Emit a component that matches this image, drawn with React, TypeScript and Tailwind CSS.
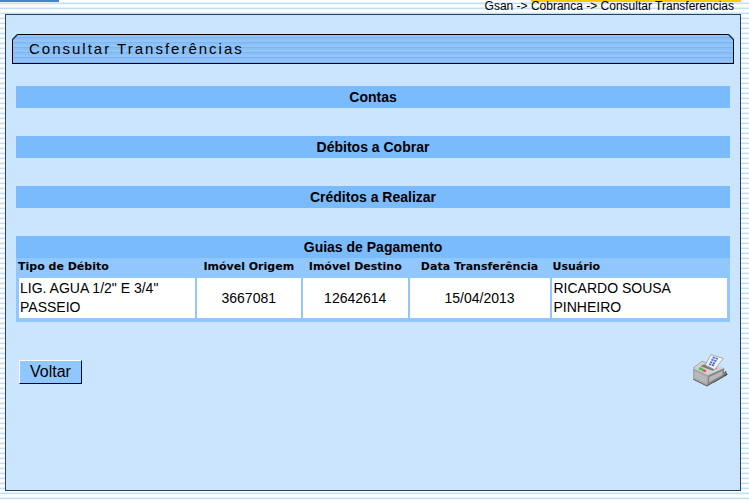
const emptySections = ["Contas", "Débitos a Cobrar", "Créditos a Realizar"];

interface Guia {
  tipoDebito: string;
  imovelOrigem: string;
  imovelDestino: string;
  dataTransferencia: string;
  usuario: string;
}

const guias: Guia[] = [
  {
    tipoDebito: 'LIG. AGUA 1/2" E 3/4" PASSEIO',
    imovelOrigem: "3667081",
    imovelDestino: "12642614",
    dataTransferencia: "15/04/2013",
    usuario: "RICARDO SOUSA PINHEIRO",
  },
];

const SectionTitle = ({ title }: { title: string }) => (
  <h2 className="bg-[#79bbfd] text-center text-sm leading-[22px] font-bold">{title}</h2>
);

const PrinterIcon = () => (
  <svg className="h-[33px] w-9" viewBox="576 369 108 99" aria-hidden="true">
    <path d="M640 456l43-25-6-11-40 32z" fill="#4c4c4c" />
    <path d="M648 446l32-19-7-3-28 17z" fill="#8a8a8a" />
    <path d="M579 411l27-20 67 19-48 23z" fill="#d2d2d2" />
    <path d="M579 411l46 22-4 32-42-21z" fill="#a6a6a6" />
    <path d="M583 419l38 18-2 21-36-18z" fill="#b8b8b8" />
    <path d="M625 433l48-22-2 25-50 29z" fill="#858585" />
    <path d="M628 438l40-19-1 13-40 22z" fill="#b8b8b8" />
    <path d="M580 445l41 20 50-29" fill="none" stroke="#5c5c5c" strokeWidth="3" />
    <path d="M579 411l27-20 20 5" fill="none" stroke="#8f8f8f" strokeWidth="2" />
    <path d="M612 400l40 11-13 8-38-13z" fill="#7d7d7d" />
    <path d="M616 402l17-31 37 11-26 34z" fill="#f0f3fb" stroke="#8e8e8e" strokeWidth="2" />
    <path
      d="M638 379l17 5m-21 2l17 5m-21 2l17 5m-20 1l16 5"
      stroke="#4f6ccc"
      strokeWidth="5"
      strokeDasharray="7 2"
    />
    <path d="M597 409l12 2-2 8-11-3z" fill="#45c654" />
    <path d="M608 414l11 3-2 7-11-3z" fill="#e65353" />
  </svg>
);

const App = () => {
  return (
    <div className="flex min-h-screen flex-col bg-[repeating-linear-gradient(to_bottom,#ffffff_0px,#ffffff_2px,#e3f2fb_2px,#e3f2fb_3px,#c3e0f0_3px,#c3e0f0_4px,#f3f9fd_4px,#f3f9fd_5px)] pr-2 pb-[10px] pl-[5px] font-['Liberation_Sans',Arial,sans-serif] text-black">
      <header className="relative h-[14px]">
        <div className="absolute top-0 -left-[5px] h-[2px] w-[59px] bg-[#4384cb]" />
        <div className="absolute top-0 right-0 h-[2px] w-[210px] bg-[#ffcb05]" />
        <nav className="relative pr-[7px] text-right text-xs leading-3">
          Gsan -&gt; Cobranca -&gt; Consultar Transferencias
        </nav>
      </header>

      <main className="flex-1 border border-[#2c405c] bg-[#cbe5fe] pt-[19px]">
        <div className="relative mr-[6px] ml-[6px] h-[30px]">
          <div className="h-full border border-black bg-[repeating-linear-gradient(to_bottom,#90c6fc_0px,#90c6fc_2px,#82b5e7_2px,#82b5e7_3px,#8ac0f6_3px,#8ac0f6_5px)]" />
          <svg className="absolute top-0 left-0 size-[6px]" viewBox="0 0 6 6" aria-hidden="true">
            <path d="M0 0h6L0 6z" fill="#cbe5fe" />
            <path d="M0 6L6 0" stroke="#22303f" strokeWidth="1.5" />
          </svg>
          <svg className="absolute top-0 right-0 size-[6px]" viewBox="0 0 6 6" aria-hidden="true">
            <path d="M0 0h6v6z" fill="#cbe5fe" />
            <path d="M0 0l6 6" stroke="#22303f" strokeWidth="1.5" />
          </svg>
          <h1 className="absolute inset-0 pl-[17px] text-[15px] leading-[30px] tracking-[2px]">
            Consultar Transferências
          </h1>
        </div>

        <div className="mt-[22px] mr-[10px] ml-[10px] flex flex-col gap-7">
          {emptySections.map((title) => (
            <SectionTitle key={title} title={title} />
          ))}

          <section>
            <SectionTitle title="Guias de Pagamento" />
            <div className="bg-[#90c7fe] px-[2px] pb-1">
              <table className="w-full table-fixed border-separate border-spacing-0 text-sm leading-[19px]">
                <colgroup>
                  <col className="w-[25%]" />
                  <col className="w-[15%]" />
                  <col className="w-[15%]" />
                  <col className="w-[20%]" />
                  <col className="w-[25%]" />
                </colgroup>
                <thead className="font-['DejaVu_Sans',Verdana,sans-serif] text-[11px] leading-4 whitespace-nowrap">
                  <tr>
                    <th className="h-5 p-0 pb-[2px] text-left">Tipo de Débito</th>
                    <th className="h-5 p-0 pb-[2px]">Imóvel Origem</th>
                    <th className="h-5 p-0 pb-[2px]">Imóvel Destino</th>
                    <th className="h-5 p-0 pb-[2px]">Data Transferência</th>
                    <th className="h-5 p-0 pb-[2px] pl-[2px] text-left">Usuário</th>
                  </tr>
                </thead>
                <tbody>
                  {guias.map((g) => (
                    <tr key={g.imovelOrigem} className="bg-white text-center">
                      <td className="border-x border-[#90c7fe] py-px pr-6 pl-px text-left">{g.tipoDebito}</td>
                      <td className="border-x border-[#90c7fe]">{g.imovelOrigem}</td>
                      <td className="border-x border-[#90c7fe]">{g.imovelDestino}</td>
                      <td className="border-x border-[#90c7fe]">{g.dataTransferencia}</td>
                      <td className="border-x border-[#90c7fe] py-px pr-6 pl-[2px] text-left">{g.usuario}</td>
                    </tr>
                  ))}
                </tbody>
              </table>
            </div>
          </section>
        </div>

        <div className="mt-8 mr-3 ml-[13px] flex items-start justify-between">
          <button
            type="button"
            className="mt-[6px] h-6 border border-t-white border-r-[#00003c] border-b-[#00003c] border-l-white bg-[#90c7fe] px-[10px] text-base leading-[22px]"
          >
            Voltar
          </button>
          <button type="button" aria-label="Imprimir">
            <PrinterIcon />
          </button>
        </div>
      </main>
    </div>
  );
};

export default App;
